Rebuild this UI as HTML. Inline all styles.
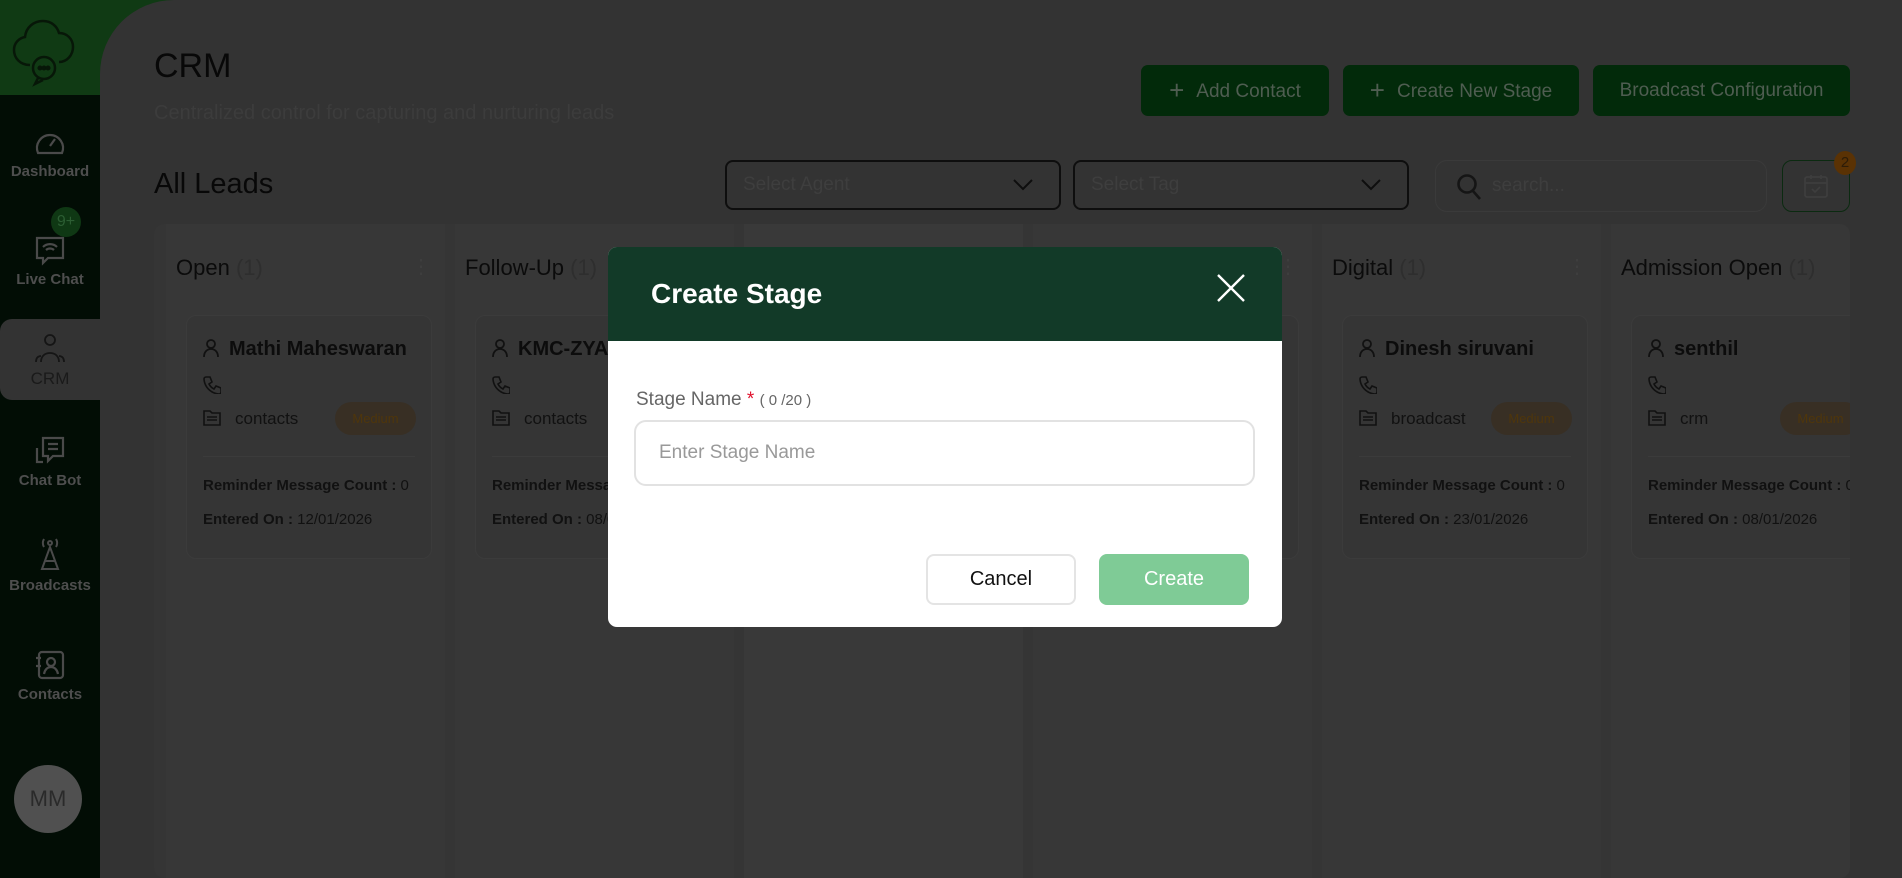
<!DOCTYPE html>
<html><head><meta charset="utf-8"><style>
*{box-sizing:border-box;margin:0;padding:0}
body{width:1902px;height:878px;overflow:hidden;background:#103a14;font-family:"Liberation Sans",sans-serif;position:relative}
.side{position:absolute;left:0;top:95px;width:100px;height:783px;background:#020d05}
.logo{position:absolute;left:0;top:0;width:100px;height:95px;background:#103a14}
.main{position:absolute;left:100px;top:0;width:1802px;height:878px;background:#333;border-top-left-radius:74px}
.nav{position:absolute;left:0;width:100px;text-align:center;color:#4e4e4e;font-size:15px;font-weight:700}
.nav svg{display:block;margin:0 auto 4px}
.btn{position:absolute;top:65px;height:51px;background:#022a0a;border-radius:7px;color:#4f5d51;font-size:19px;line-height:51px;text-align:center}
.sel{position:absolute;top:160px;height:50px;border:2px solid #0e0e0e;border-radius:8px;color:#3e3e3e;font-size:19px;line-height:46px;padding-left:16px}
.board{position:absolute;left:154px;top:224px;width:1696px;height:654px;background:#353535;border-radius:10px;overflow:hidden}
.col{position:absolute;top:0;width:279px;height:654px;background:#373737}
.ct{position:absolute;top:31px;left:10px;font-size:22px;color:#0b0b0b}
.ct span{color:#333;color:#2e2e2e}
.dots{position:absolute;top:30px;right:14px;color:#3e3e3e;font-size:20px}
.card{position:absolute;left:20px;top:91px;width:246px;height:244px;border:1px solid #3b3b3b;border-radius:10px;background:#353535}
.nm{position:absolute;left:16px;top:22px;font-size:20px;font-weight:700;color:#0c0c0c;white-space:nowrap}
.nm i{display:inline-block;width:16px;height:18px;margin-right:10px;vertical-align:-2px}
.ph{position:absolute;left:16px;top:60px;width:160px;height:22px}
.src{position:absolute;left:16px;top:93px;font-size:17px;color:#111;white-space:nowrap}
.bd{position:absolute;left:148px;top:86px;width:81px;height:33px;border-radius:17px;background:#382f24;color:#4f360b;font-size:13px;line-height:33px;text-align:center}
.hr{position:absolute;left:16px;right:16px;top:140px;border-top:1px solid #3b3b3b}
.l1,.l2{position:absolute;left:16px;font-size:15px;color:#111;white-space:nowrap}
.l1{top:161px}.l2{top:195px}
.l1 b,.l2 b{font-weight:700}
.modal{position:absolute;left:608px;top:247px;width:674px;height:380px;background:#fff;border-radius:9px;overflow:hidden}
.mh{height:94px;background:#123a28;color:#fff;font-size:28px;font-weight:700;padding:31px 0 0 43px}
</style></head><body>
<div class="logo">
<svg width="80" height="80" viewBox="0 0 80 80" style="position:absolute;left:8px;top:10px" fill="none" stroke="#071708" stroke-width="2.5"><path d="M22 55c-10 0-16-7-16-15 0-7 5-12 11-13 1-10 9-16 18-16 8 0 14 5 16 12 8 0 14 6 14 14s-6 15-14 15"/><circle cx="36" cy="58" r="11"/><path d="M30 68l-3 6 8-4"/><circle cx="32" cy="58" r="1.3" fill="#071708"/><circle cx="36" cy="58" r="1.3" fill="#071708"/><circle cx="40" cy="58" r="1.3" fill="#071708"/></svg>
</div>
<div class="side">
<div style="position:absolute;left:0;top:224px;width:100px;height:81px;background:#333;border-radius:12px 0 0 12px"></div>
<div class="nav" style="top:32px"><svg width="34" height="32" viewBox="0 0 34 32" fill="none" stroke="#4a4a4a" stroke-width="2.2"><path d="M5 26A13 13 0 1 1 29 26z"/><path d="M17 19l5-7"/></svg>Dashboard</div>
<div class="nav" style="top:134px"><svg width="36" height="38" viewBox="0 0 36 38" fill="none" stroke="#4a4a4a" stroke-width="2.2"><path d="M5 9h26v20H16l-5 5v-5H5z"/><path d="M11 18a10 10 0 0 1 14 0M14 21a6 6 0 0 1 8 0"/></svg>Live Chat</div>
<div style="position:absolute;left:51px;top:112px;width:30px;height:30px;border-radius:50%;background:#0f3814;color:#2c5e33;font-size:16px;line-height:30px;text-align:center">9+</div>
<div class="nav" style="top:236px;color:#1a1a1a"><svg width="34" height="34" viewBox="0 0 34 34" fill="none" stroke="#151515" stroke-width="1.8"><circle cx="17" cy="9" r="5"/><path d="M8 31c0-6 4-9 9-9s9 3 9 9M3 31c0-4 2-6 5-6M31 31c0-4-2-6-5-6"/></svg><span style="font-weight:400;font-size:17px">CRM</span></div>
<div class="nav" style="top:339px"><svg width="34" height="34" viewBox="0 0 34 34" fill="none" stroke="#4a4a4a" stroke-width="2.2"><path d="M10 4h20v18H20l-5 5v-5h-5z"/><path d="M15 10h10M15 15h10M4 14v14h6"/></svg>Chat Bot</div>
<div class="nav" style="top:440px"><svg width="34" height="38" viewBox="0 0 34 38" fill="none" stroke="#4a4a4a" stroke-width="2"><circle cx="17" cy="8" r="2"/><path d="M11 4a8 8 0 0 0 0 8M23 4a8 8 0 0 1 0 8M17 12L9 34h16zM12 26h10"/></svg>Broadcasts</div>
<div class="nav" style="top:553px"><svg width="34" height="34" viewBox="0 0 34 34" fill="none" stroke="#4a4a4a" stroke-width="2.2"><rect x="6" y="4" width="24" height="26" rx="3"/><circle cx="18" cy="14" r="4"/><path d="M11 26c1-5 4-7 7-7s6 2 7 7M3 10h5M3 18h5"/></svg>Contacts</div>
<div style="position:absolute;left:14px;top:670px;width:68px;height:68px;border-radius:50%;background:#505050;color:#2a2a2a;font-size:22px;line-height:68px;text-align:center">MM</div>
</div>
<div class="main"></div>
<div style="position:absolute;left:154px;top:47px;font-size:34px;color:#080808">CRM</div>
<div style="position:absolute;left:154px;top:102px;font-size:20px;color:#3c3c3c">Centralized control for capturing and nurturing leads</div>
<div style="position:absolute;left:154px;top:168px;font-size:29px;color:#080808">All Leads</div>
<div class="btn" style="left:1141px;width:188px"><span style="font-size:26px;vertical-align:-2px;margin-right:12px">+</span>Add Contact</div>
<div class="btn" style="left:1343px;width:236px"><span style="font-size:26px;vertical-align:-2px;margin-right:12px">+</span>Create New Stage</div>
<div class="btn" style="left:1593px;width:257px">Broadcast Configuration</div>
<div class="sel" style="left:725px;width:336px">Select Agent<svg width="20" height="12" style="position:absolute;right:26px;top:17px" fill="none" stroke="#0e0e0e" stroke-width="2"><path d="M1 1l9 9 9-9"/></svg></div>
<div class="sel" style="left:1073px;width:336px">Select Tag<svg width="20" height="12" style="position:absolute;right:26px;top:17px" fill="none" stroke="#0e0e0e" stroke-width="2"><path d="M1 1l9 9 9-9"/></svg></div>
<div style="position:absolute;left:1435px;top:160px;width:332px;height:52px;border:1px solid #3a3a3a;border-radius:12px;color:#3e3e3e;font-size:19px;line-height:50px;padding-left:56px">search...<svg width="26" height="28" style="position:absolute;left:20px;top:12px" fill="none" stroke="#151515" stroke-width="2.6"><circle cx="11" cy="11" r="8.5"/><path d="M17 18l7 8"/></svg></div>
<div style="position:absolute;left:1782px;top:160px;width:68px;height:52px;border:1.5px solid #0b2a10;border-radius:10px"><svg width="26" height="26" viewBox="0 0 26 26" style="position:absolute;left:20px;top:12px" fill="none" stroke="#3e3e3e" stroke-width="1.8"><rect x="2" y="4" width="22" height="20" rx="2"/><path d="M2 10h22M8 2v4M18 2v4M9 16l3 3 5-5"/></svg></div>
<div style="position:absolute;left:1834px;top:151px;width:22px;height:24px;border-radius:50%;background:#5a3204;color:#2c1c08;font-size:15px;line-height:24px;text-align:center">2</div>
<div class="board">
<div class="col" style="left:12px"><div class="ct">Open <span>(1)</span></div><div class="dots">⋮</div>
<div class="card"><div class="nm"><i><svg width="16" height="18" fill="none" stroke="#111" stroke-width="1.8"><circle cx="8" cy="5" r="4"/><path d="M1 18c0-5 3-8 7-8s7 3 7 8"/></svg></i>Mathi Maheswaran</div>
<div class="ph"><svg width="18" height="18" fill="none" stroke="#111" stroke-width="1.6"><path d="M3 1h4l2 5-3 2a11 11 0 0 0 5 5l2-3 5 2v4a2 2 0 0 1-2 2A16 16 0 0 1 1 3a2 2 0 0 1 2-2z"/></svg></div>
<div class="src"><svg width="18" height="16" style="vertical-align:-2px;margin-right:14px" fill="none" stroke="#111" stroke-width="1.6"><path d="M1 1h6l2 2h8v12H1z M4 7h10M4 10h10"/></svg>contacts</div><div class="bd">Medium</div>
<div class="hr"></div><div class="l1"><b>Reminder Message Count :</b> 0</div><div class="l2"><b>Entered On :</b> 12/01/2026</div></div></div>
<div class="col" style="left:301px"><div class="ct">Follow-Up <span>(1)</span></div>
<div class="card"><div class="nm"><i><svg width="16" height="18" fill="none" stroke="#111" stroke-width="1.8"><circle cx="8" cy="5" r="4"/><path d="M1 18c0-5 3-8 7-8s7 3 7 8"/></svg></i>KMC-ZYA</div>
<div class="ph"><svg width="18" height="18" fill="none" stroke="#111" stroke-width="1.6"><path d="M3 1h4l2 5-3 2a11 11 0 0 0 5 5l2-3 5 2v4a2 2 0 0 1-2 2A16 16 0 0 1 1 3a2 2 0 0 1 2-2z"/></svg></div>
<div class="src"><svg width="18" height="16" style="vertical-align:-2px;margin-right:14px" fill="none" stroke="#111" stroke-width="1.6"><path d="M1 1h6l2 2h8v12H1z M4 7h10M4 10h10"/></svg>contacts</div>
<div class="hr"></div><div class="l1"><b>Reminder Message Count :</b> 0</div><div class="l2"><b>Entered On :</b> 08/01/2026</div></div></div>
<div class="col" style="left:590px;background:#393939"></div>
<div class="col" style="left:879px"><div class="dots">⋮</div><div class="card"></div></div>
<div class="col" style="left:1168px"><div class="ct">Digital <span>(1)</span></div><div class="dots">⋮</div>
<div class="card"><div class="nm"><i><svg width="16" height="18" fill="none" stroke="#111" stroke-width="1.8"><circle cx="8" cy="5" r="4"/><path d="M1 18c0-5 3-8 7-8s7 3 7 8"/></svg></i>Dinesh siruvani</div>
<div class="ph"><svg width="18" height="18" fill="none" stroke="#111" stroke-width="1.6"><path d="M3 1h4l2 5-3 2a11 11 0 0 0 5 5l2-3 5 2v4a2 2 0 0 1-2 2A16 16 0 0 1 1 3a2 2 0 0 1 2-2z"/></svg></div>
<div class="src"><svg width="18" height="16" style="vertical-align:-2px;margin-right:14px" fill="none" stroke="#111" stroke-width="1.6"><path d="M1 1h6l2 2h8v12H1z M4 7h10M4 10h10"/></svg>broadcast</div><div class="bd">Medium</div>
<div class="hr"></div><div class="l1"><b>Reminder Message Count :</b> 0</div><div class="l2"><b>Entered On :</b> 23/01/2026</div></div></div>
<div class="col" style="left:1457px"><div class="ct">Admission Open <span>(1)</span></div>
<div class="card"><div class="nm"><i><svg width="16" height="18" fill="none" stroke="#111" stroke-width="1.8"><circle cx="8" cy="5" r="4"/><path d="M1 18c0-5 3-8 7-8s7 3 7 8"/></svg></i>senthil</div>
<div class="ph"><svg width="18" height="18" fill="none" stroke="#111" stroke-width="1.6"><path d="M3 1h4l2 5-3 2a11 11 0 0 0 5 5l2-3 5 2v4a2 2 0 0 1-2 2A16 16 0 0 1 1 3a2 2 0 0 1 2-2z"/></svg></div>
<div class="src"><svg width="18" height="16" style="vertical-align:-2px;margin-right:14px" fill="none" stroke="#111" stroke-width="1.6"><path d="M1 1h6l2 2h8v12H1z M4 7h10M4 10h10"/></svg>crm</div><div class="bd">Medium</div>
<div class="hr"></div><div class="l1"><b>Reminder Message Count :</b> 0</div><div class="l2"><b>Entered On :</b> 08/01/2026</div></div></div>
</div>
<div class="modal">
<div class="mh">Create Stage</div>
<svg width="30" height="30" style="position:absolute;left:608px;top:26px" stroke="#fff" stroke-width="2.4"><path d="M2 2l26 26M28 2L2 28"/></svg>
<div style="position:absolute;left:28px;top:142px;font-size:19px;color:#666">Stage Name <span style="color:#e0102c">*</span> <span style="font-size:15px">( 0 /20 )</span></div>
<div style="position:absolute;left:26px;top:173px;width:621px;height:66px;border:2px solid #e2e2e2;border-radius:12px;color:#999;font-size:19px;line-height:62px;padding-left:23px">Enter Stage Name</div>
<div style="position:absolute;left:318px;top:307px;width:150px;height:51px;border:2px solid #e4e4e4;border-radius:8px;font-size:20px;line-height:47px;text-align:center;color:#111">Cancel</div>
<div style="position:absolute;left:491px;top:307px;width:150px;height:51px;background:#7fcb96;border-radius:8px;font-size:20px;line-height:51px;text-align:center;color:#fff">Create</div>
</div>
</body></html>
